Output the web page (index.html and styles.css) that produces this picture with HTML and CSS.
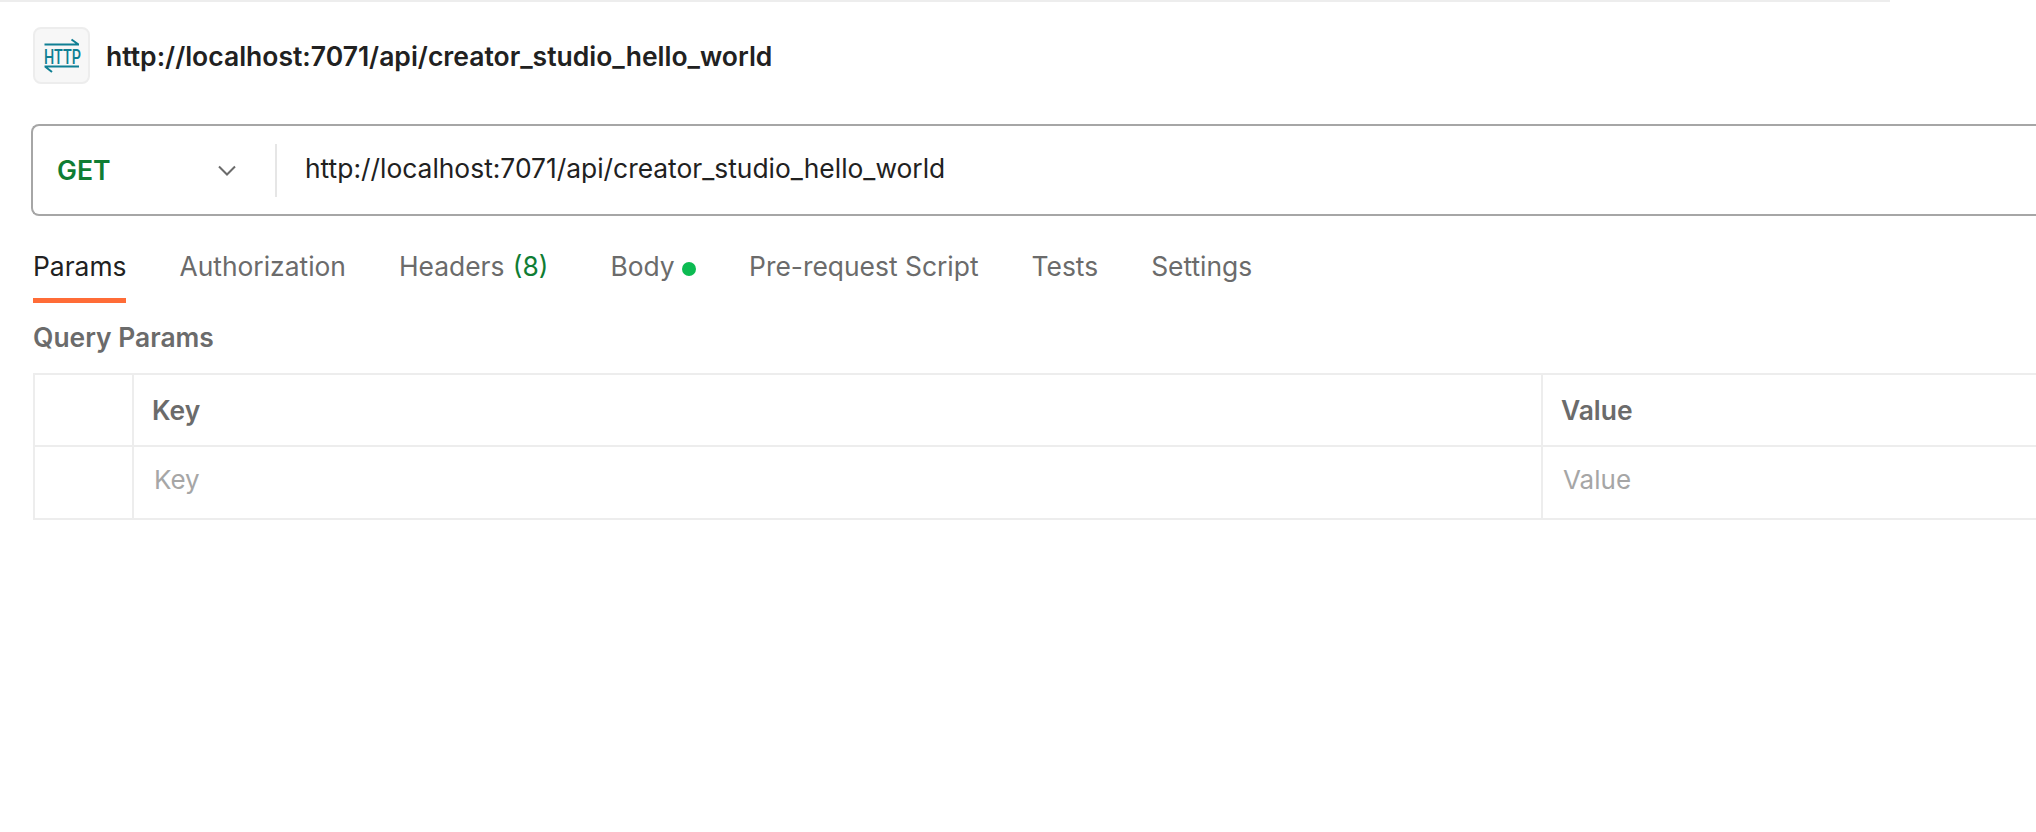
FILE: index.html
```html
<!DOCTYPE html>
<html lang="en">
<head>
  <meta charset="UTF-8">
  <meta name="viewport" content="width=device-width, initial-scale=1.0">
  <title>HTTP request</title>
  <link rel="stylesheet" href="styles.css">
</head>
<body>
  <div class="top-line"></div>

  <header class="request-title">
    <div class="http-icon">
      <svg width="38" height="36" viewBox="0 0 38 36" fill="none" stroke="#0f7f93" stroke-width="2">
        <path d="M1.500 6.500H36M28.500 1.500L35.500 6.500"/>
        <path d="M1.500 28.500H36M2 28.500L9 34"/>
        <g transform="translate(1 25.500) scale(0.72 1)">
          <text class="http-letters">HTTP</text>
        </g>
      </svg>
    </div>
    <h1>http://localhost:7071/api/creator_studio_hello_world</h1>
  </header>

  <div class="url-bar">
    <div class="method">
      <span>GET</span>
      <svg width="18" height="11" viewBox="0 0 18 11" fill="none" stroke="#6b6b6b" stroke-width="2">
        <path d="M1 1.500L9 9.500L17 1.500"/>
      </svg>
    </div>
    <div class="url-text">http://localhost:7071/api/creator_studio_hello_world</div>
  </div>

  <nav class="tabs">
    <a class="tab active">Params</a>
    <a class="tab">Authorization</a>
    <a class="tab tab-headers">Headers <span class="count">(8)</span></a>
    <a class="tab">Body <span class="dot"></span></a>
    <a class="tab">Pre-request Script</a>
    <a class="tab">Tests</a>
    <a class="tab">Settings</a>
  </nav>

  <h2 class="section-title">Query Params</h2>

  <div class="params">
    <div class="cell"></div>
    <div class="cell head">Key</div>
    <div class="cell head">Value</div>
    <div class="cell"></div>
    <div class="cell hint">Key</div>
    <div class="cell hint">Value</div>
  </div>
</body>
</html>
```

FILE: styles.css
```css
html, body {
  overflow: hidden;
}

body {
  margin: 0;
  padding: 0;
  height: 832px;
  background: #fff;
  color: #212121;
  font-family: 'Inter', sans-serif;
}

.top-line {
  width: 1890px;
  height: 2px;
  background: #ededed;
}

.request-title {
  display: flex;
  align-items: center;
  gap: 16px;
  margin: 25px 0 0 33px;
}

.http-icon {
  display: flex;
  align-items: center;
  justify-content: center;
  box-sizing: border-box;
  width: 57px;
  height: 57px;
  background: #f7f7f7;
  border: 2px solid #ededed;
  border-radius: 8px;
}

.http-letters {
  fill: #0f7f93;
  stroke: none;
  font-family: 'Roboto', sans-serif;
  font-size: 20px;
  font-weight: 500;
}

.request-title h1 {
  margin: 0;
  font-size: 26.500px;
  font-weight: 600;
}

.url-bar {
  display: flex;
  align-items: center;
  box-sizing: border-box;
  height: 92px;
  margin: 40px 0 0 31px;
  border: 2px solid #a6a6a6;
  border-right: none;
  border-radius: 8px 0 0 8px;
}

.method {
  display: flex;
  align-items: center;
  justify-content: space-between;
  box-sizing: border-box;
  width: 244px;
  height: 53px;
  padding: 0 39px 0 24px;
  border-right: 2px solid #e6e6e6;
  color: #0f7d33;
  font-size: 26.600px;
  font-weight: 600;
}

.url-text {
  margin: -4px 0 0 28px;
  font-size: 26.400px;
}

.tabs {
  display: flex;
  gap: 53px;
  margin: 17px 0 0 33px;
  color: #6b6b6b;
  font-size: 26.400px;
}

.tab {
  height: 52px;
  padding-top: 18px;
  line-height: 31px;
  box-sizing: content-box;
}

.tab.active {
  color: #212121;
  box-shadow: inset 0 -5px 0 #ff6c37;
}

.tab-headers {
  margin-right: 9px;
}

.count {
  color: #0f7d33;
  margin-left: 1px;
}

.dot {
  display: inline-block;
  width: 14px;
  height: 14px;
  border-radius: 50%;
  background: #0cbb52;
}

.section-title {
  margin: 18px 0 0 33px;
  color: #6b6b6b;
  font-size: 26.400px;
  font-weight: 600;
}

.params {
  display: grid;
  grid-template-columns: 99px 1409px 1fr;
  grid-template-rows: 72px 73px;
  margin: 20px 0 0 33px;
  border-top: 2px solid #ededed;
}

.cell {
  display: flex;
  align-items: center;
  padding-left: 18px;
  border-left: 2px solid #ededed;
  border-bottom: 2px solid #ededed;
  font-size: 26.400px;
}

.head {
  color: #6b6b6b;
  font-weight: 600;
}

.hint {
  padding-left: 20px;
  padding-bottom: 6px;
  color: #a6a6a6;
  font-size: 26px;
}
```
